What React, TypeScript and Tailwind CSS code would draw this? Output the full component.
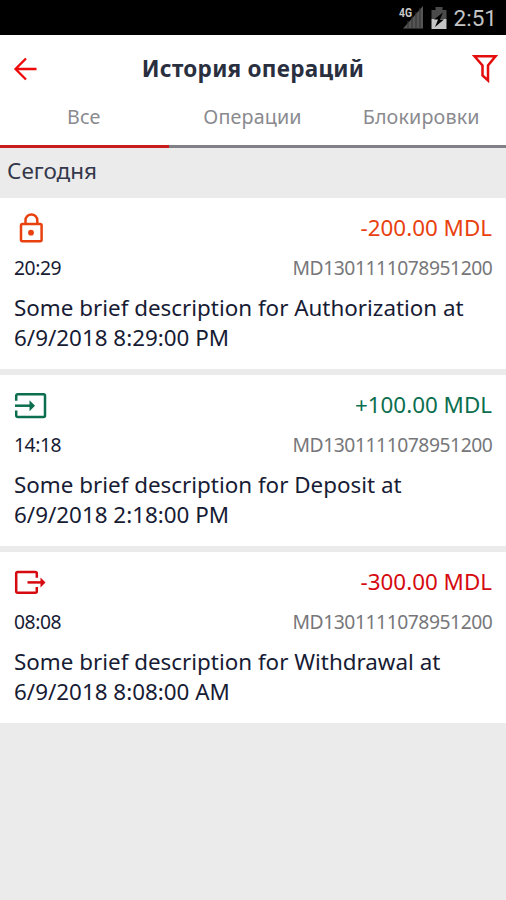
// App.tsx
import type { ReactNode } from "react";

function LockIcon() {
  return (
    <svg width="34" height="34" viewBox="0 0 34 34" fill="none" stroke="#e8410f" strokeWidth="2.5">
      <rect x="8" y="13" width="20.600" height="17.2" rx="1.4" />
      <path d="M12.500 13V9.300a5.900 5.900 0 0 1 11.800 0V13" />
      <circle cx="18" cy="21.700" r="2.900" fill="#e8410f" stroke="none" />
    </svg>
  );
}

function DepositIcon() {
  return (
    <svg width="34" height="34" viewBox="0 0 34 34" fill="none" stroke="#0b6e4f" strokeWidth="2.5">
      <path d="M3.2 12.800V7.8a1.500 1.500 0 0 1 1.500-1.500H30.500a1.500 1.500 0 0 1 1.500 1.500V27.500a1.500 1.500 0 0 1-1.500 1.500H4.700A1.500 1.500 0 0 1 3.2 27.500v-5" />
      <path d="M2 17.700h16" />
      <path d="M16.500 12.200l5.500 5.500-5.500 5.500z" fill="#0b6e4f" stroke="none" />
    </svg>
  );
}

function WithdrawalIcon() {
  return (
    <svg width="34" height="34" viewBox="0 0 34 34" fill="none" stroke="#d5090f" strokeWidth="2.5">
      <path d="M23.800 12.800V8.600a1.500 1.500 0 0 0-1.500-1.500H4.700a1.500 1.500 0 0 0-1.500 1.500v17.600a1.500 1.500 0 0 0 1.500 1.500h17.600a1.500 1.500 0 0 0 1.500-1.500v-4.300" />
      <path d="M14.500 17.400h14" />
      <path d="M27.500 12.400l5 5-5 5z" fill="#d5090f" stroke="none" />
    </svg>
  );
}

type Operation = {
  icon: ReactNode;
  amount: string;
  color: string;
  time: string;
  account: string;
  text: string;
  date: string;
};

const account = "MD1301111078951200";

const operations: Operation[] = [
  { icon: <LockIcon />,       amount: "-200.00 MDL", color: "text-[#e8410f]", time: "20:29", account, text: "Some brief description for Authorization at", date: "6/9/2018 8:29:00 PM" },
  { icon: <DepositIcon />,    amount: "+100.00 MDL", color: "text-[#0b6e4f]", time: "14:18", account, text: "Some brief description for Deposit at",       date: "6/9/2018 2:18:00 PM" },
  { icon: <WithdrawalIcon />, amount: "-300.00 MDL", color: "text-[#d5090f]", time: "08:08", account, text: "Some brief description for Withdrawal at",    date: "6/9/2018 8:08:00 AM" },
];

function StatusBar() {
  return (
    <div className="flex h-[35px] items-center justify-end bg-black pr-[9px] font-[Roboto,sans-serif] text-[#c4c4c4]">
      <svg width="25" height="24" viewBox="0 0 25 24" className="mr-[7px]">
        <path d="M24 0V22.500H4z" fill="#555" />
        <path d="M9 15v8M13 10v13M17 6v17M21 2v21" stroke="#333" strokeWidth="1" />
        <text x="0" y="10.500" fontSize="12.500" fontWeight="700" textLength="13" lengthAdjust="spacingAndGlyphs" fill="#c8c8c8" stroke="#000" strokeWidth="2" paintOrder="stroke">4G</text>
      </svg>
      <svg width="16" height="22" viewBox="0 0 16 22" className="mr-[7px]">
        <path d="M0.500 3H4.500V0h7v3h4v9H.5z" fill="#4a4a4a" />
        <path d="M.5 12h15v10H.5z" fill="#c4c4c4" />
        <path d="M12 5.500L3 12.500h4L4 20l9-7.500H9z" fill="#000" />
      </svg>
      <span className="pt-[2px] text-[22.500px] leading-[33px]">2:51</span>
    </div>
  );
}

function OperationCard({ op }: { op: Operation }) {
  return (
    <li className="h-[171.5px] bg-white px-[14px] pt-[13px]">
      <div className="flex h-[34px] items-center justify-between">
        <span className="-ml-[1px]">{op.icon}</span>
        <span className={`text-[22.4px] leading-[34px] ${op.color}`}>{op.amount}</span>
      </div>
      <div className="mt-[9px] flex justify-between text-[19.300px] leading-[28px] tracking-[-0.450px]">
        <span>{op.time}</span>
        <span className="-mr-[0.450px] text-[#77777a]">{op.account}</span>
      </div>
      <p className="mt-[11px] text-[22.4px] leading-[30px] whitespace-nowrap">
        {op.text}
        <br />
        {op.date}
      </p>
    </li>
  );
}

export default function App() {
  return (
    <div className="flex h-[900px] w-[506px] flex-col overflow-hidden bg-[#ebebeb] font-['Noto_Sans',sans-serif] text-[#171b34]">
      <StatusBar />

      <header className="bg-white">
        <div className="grid h-[66px] grid-cols-[1fr_auto_1fr] items-center pt-[2px] pr-[8px] pl-[13px]">
          <svg width="25" height="24" viewBox="0 0 25 24" fill="none" stroke="#ee0a0a" strokeWidth="2.3">
            <path d="M23.500 12H2.500M13 1.500L2.500 12 13 22.500" />
          </svg>
          <h1 className="-ml-[5px] text-[22.5px] leading-[34px] font-bold tracking-[0.280px] text-[#2a2f3f]">История операций</h1>
          <svg width="26" height="30" viewBox="0 0 26 30" fill="none" stroke="#e30d0d" strokeWidth="2.500" className="justify-self-end">
            <path d="M2.500 2.300H23.500L16 11.500V26.500L10.500 21.500V11.500z" />
          </svg>
        </div>
        <nav className="grid h-[47px] grid-cols-3 text-center text-[19.7px] tracking-[0.150px] text-[#8a8a8f]">
          <button className="border-b-[3px] border-[#c91c1c] pr-[1px] pb-[12px]">Все</button>
          <button className="border-b-[3px] border-[#808086] pr-[1px] pb-[12px]">Операции</button>
          <button className="border-b-[3px] border-[#808086] pr-[1px] pb-[12px]">Блокировки</button>
        </nav>
      </header>

      <h2 className="h-[49.500px] shrink-0 pl-[7px] text-[22.5px] leading-[45px] text-[#33374a]">Сегодня</h2>

      <ul className="flex flex-col gap-[5.700px]">
        {operations.map(op => <OperationCard key={op.time} op={op} />)}
      </ul>
    </div>
  );
}
